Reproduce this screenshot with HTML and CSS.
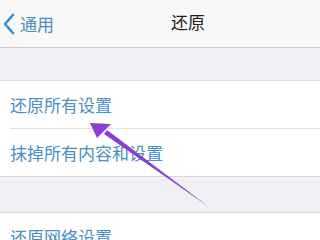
FILE: index.html
```html
<!DOCTYPE html>
<html>
<head>
<meta charset="utf-8">
<link rel="stylesheet" href="styles.css">
</head>
<body>
<div class="screen">
  <div class="nav">
    <div class="back">
      <svg class="chev" width="12" height="22" viewBox="0 0 12 22"><path d="M10 2 L2 11 L10 20" fill="none" stroke="#3a8fd3" stroke-width="2.6" stroke-linecap="round" stroke-linejoin="round"/></svg>
      <span class="back-text">通用</span>
    </div>
    <div class="title">还原</div>
  </div>
  <div class="gap gap1"></div>
  <div class="group">
    <div class="cell"><span>还原所有设置</span></div>
    <div class="cell"><span>抹掉所有内容和设置</span></div>
  </div>
  <div class="gap gap2"></div>
  <div class="group">
    <div class="cell"><span>还原网络设置</span></div>
  </div>
  <svg class="arrow" width="320" height="240" viewBox="0 0 320 240">
    <path d="M209 207 L104 134 L107 130 Z" fill="#8b3fd0"/>
    <path d="M90 123 L111 124 L97 138 Z" fill="#8b3fd0"/>
  </svg>
</div>
</body>
</html>
```
FILE: styles.css
```css
html, body {
  margin: 0;
  padding: 0;
}
body {
  font-family: "Noto Sans CJK SC", "Noto Sans", sans-serif;
  background: #efeff4;
}
.screen {
  position: relative;
  width: 320px;
  height: 240px;
  overflow: hidden;
  background: #efeff4;
}
.nav {
  height: 47px;
  background: #f8f8f9;
  border-bottom: 1px solid #cfcfd3;
  display: flex;
  align-items: center;
  position: relative;
}
.back {
  display: flex;
  align-items: center;
  padding-left: 3px;
  gap: 5px;
}
.back-text {
  color: #4a8cc4;
  font-size: 17px;
  line-height: 22px;
}
.title {
  position: absolute;
  left: 171px;
  top: 11px;
  font-size: 17px;
  line-height: 22px;
  color: #222;
}
.gap1 {
  height: 32px;
}
.gap2 {
  height: 35px;
  border-bottom: 1px solid #d8d8dc;
}
.group {
  background: #ffffff;
  border-top: 1px solid #dcdce0;
}
.gap2 + .group {
  border-top: none;
}
.cell {
  height: 47px;
  margin-left: 10px;
  display: flex;
  align-items: center;
  border-bottom: 1px solid #e2e2e6;
  color: #4a8fc6;
  font-size: 17px;
}
.cell:last-child {
  margin-left: 0;
  padding-left: 10px;
  border-bottom: 1px solid #d8d8dc;
}
.arrow {
  position: absolute;
  left: 0;
  top: 0;
}
```
